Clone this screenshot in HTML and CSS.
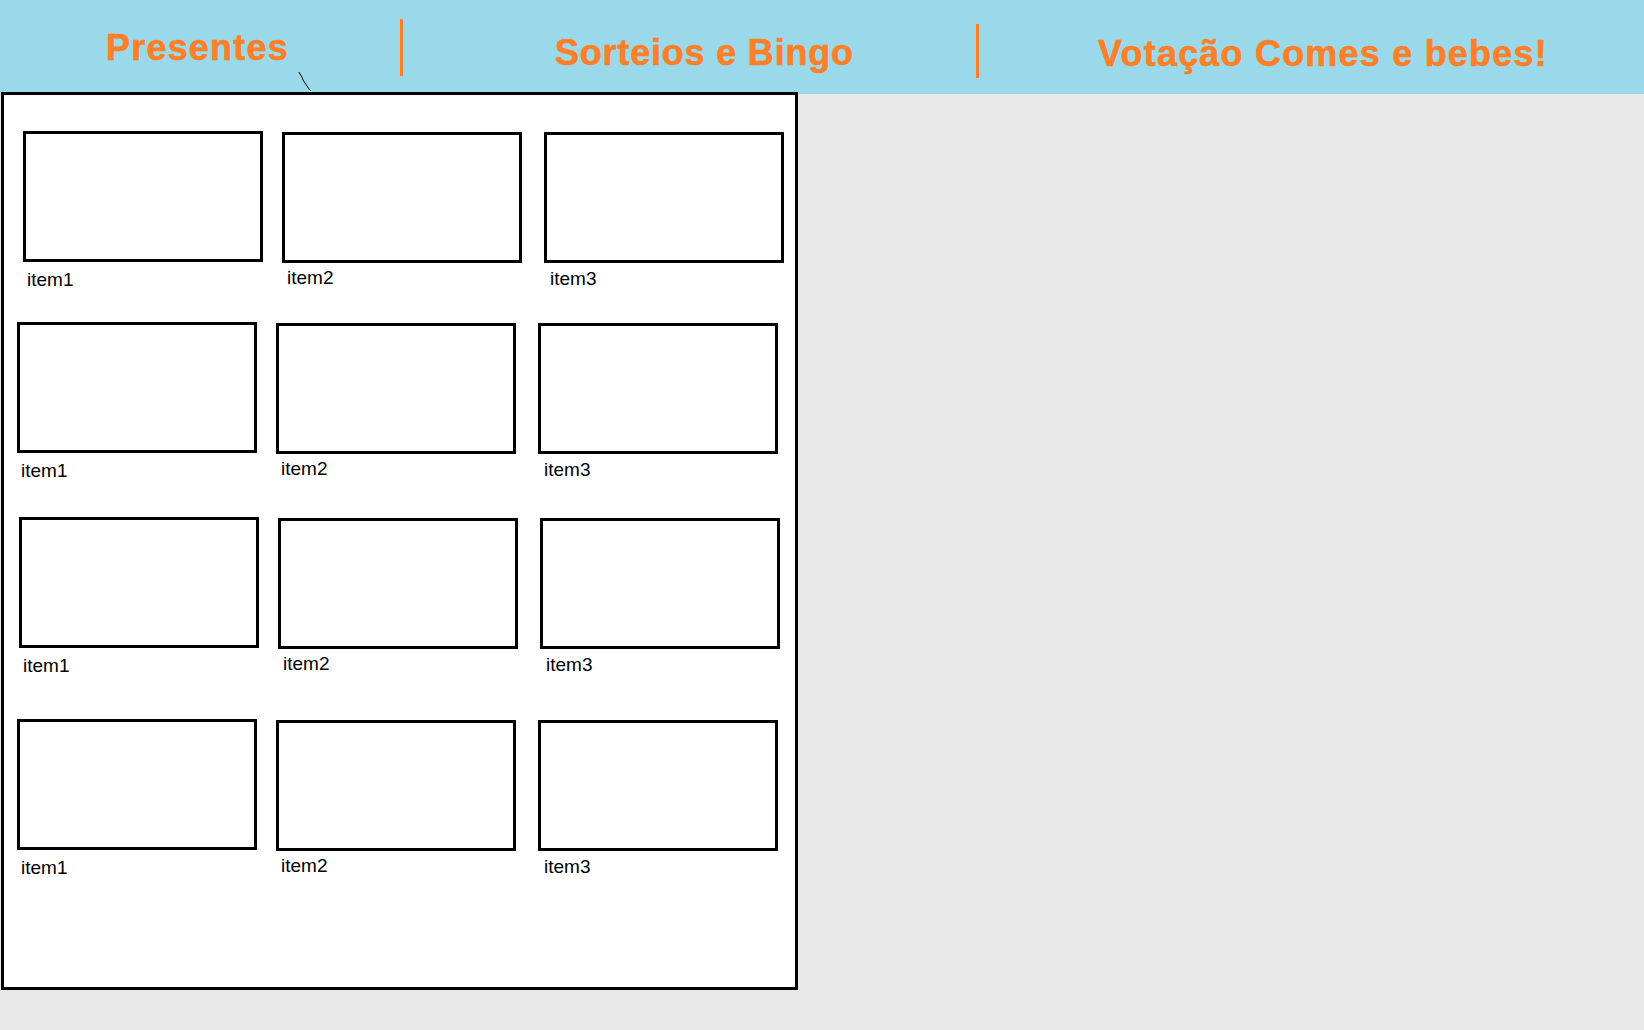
FILE: index.html
```html
<!DOCTYPE html>
<html lang="pt">
<head>
<meta charset="utf-8">
<title>Wireframe</title>
<link rel="stylesheet" href="styles.css">
</head>
<body>
<header class="topbar">
  <div class="tab tab-presentes">Presentes</div>
  <div class="divider divider-1"></div>
  <div class="tab tab-sorteios">Sorteios e Bingo</div>
  <div class="divider divider-2"></div>
  <div class="tab tab-votacao">Votação Comes e bebes!</div>
  <svg class="scribble" width="16" height="22" viewBox="0 0 16 22"><polyline points="2,1 3,3 5,6 6,9 8,12 10,15 12,18 14,20" fill="none" stroke="#000" stroke-width="1"/></svg>
</header>
<main class="panel">
  <div class="row row-1">
    <div class="cell cell-1"><div class="box"></div><div class="label">item1</div></div>
    <div class="cell cell-2"><div class="box"></div><div class="label">item2</div></div>
    <div class="cell cell-3"><div class="box"></div><div class="label">item3</div></div>
  </div>
  <div class="row row-2">
    <div class="cell cell-1"><div class="box"></div><div class="label">item1</div></div>
    <div class="cell cell-2"><div class="box"></div><div class="label">item2</div></div>
    <div class="cell cell-3"><div class="box"></div><div class="label">item3</div></div>
  </div>
  <div class="row row-3">
    <div class="cell cell-1"><div class="box"></div><div class="label">item1</div></div>
    <div class="cell cell-2"><div class="box"></div><div class="label">item2</div></div>
    <div class="cell cell-3"><div class="box"></div><div class="label">item3</div></div>
  </div>
  <div class="row row-4">
    <div class="cell cell-1"><div class="box"></div><div class="label">item1</div></div>
    <div class="cell cell-2"><div class="box"></div><div class="label">item2</div></div>
    <div class="cell cell-3"><div class="box"></div><div class="label">item3</div></div>
  </div>
</main>
</body>
</html>
```

FILE: styles.css
```css
* { box-sizing: border-box; }
html, body { margin: 0; padding: 0; }
body {
  background: #e8e8e8;
  font-family: "Liberation Sans", Arial, sans-serif;
  width: 1644px;
  height: 1030px;
  overflow: hidden;
}
.topbar {
  position: relative;
  height: 94px;
  background: #99d9ea;
  display: grid;
  grid-template-columns: 400px 3px 573px 3px 1fr;
  align-items: start;
}
.tab {
  color: #ff7f27;
  font-weight: bold;
  font-size: 36px;
  line-height: 36px;
  letter-spacing: 0.8px;
  -webkit-text-stroke: 0.6px #ff7f27;
  white-space: nowrap;
}
.tab-presentes { padding-left: 106px; padding-top: 29.5px; letter-spacing: 1.2px; }
.tab-sorteios { padding-left: 152px; padding-top: 34.5px; }
.tab-votacao { padding-left: 119px; padding-top: 35.5px; letter-spacing: 1.2px; }
.divider { background: #ff7f27; width: 3px; }
.divider-1 { margin-top: 19px; height: 57px; }
.divider-2 { margin-top: 24px; height: 54px; }
.scribble { position: absolute; left: 297px; top: 71px; }

.panel {
  position: relative;
  margin-top: -2px;
  margin-left: 1px;
  width: 797px;
  height: 898px;
  background: #fff;
  border: 3px solid #000;
}
.row { display: flex; align-items: flex-start; }
.row-1 { margin-top: 36px; padding-left: 19px; }
.row-2 { margin-top: 32px; padding-left: 13px; }
.row-3 { margin-top: 36px; padding-left: 15px; }
.row-4 { margin-top: 43px; padding-left: 13px; }
.cell { width: 240px; }
.cell-2 { margin-left: 19px; margin-top: 1px; }
.cell-3 { margin-left: 22px; margin-top: 1px; }
.box {
  width: 240px;
  height: 131px;
  border: 3px solid #000;
  background: #fff;
}
.label {
  font-size: 19px;
  line-height: 20px;
  color: #000;
}
.cell-1 .label { margin-top: 8px; padding-left: 4px; }
.cell-2 .label { margin-top: 4.5px; padding-left: 5px; }
.cell-3 .label { margin-top: 6px; padding-left: 6px; }
```
